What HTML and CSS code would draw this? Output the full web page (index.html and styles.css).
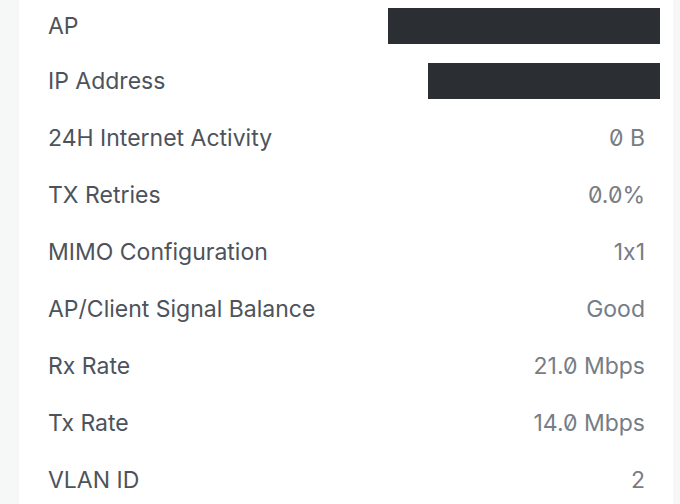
FILE: index.html
```html
<!DOCTYPE html>
<html>
<head>
<meta charset="utf-8">
<link rel="stylesheet" href="styles.css">
</head>
<body>
<div class="page">
  <div class="panel">
    <div class="row first"><span class="label">AP</span><span class="redact r1"></span></div>
    <div class="row"><span class="label">IP Address</span><span class="redact r2"></span></div>
    <div class="row"><span class="label">24H Internet Activity</span><span class="value">0 B</span></div>
    <div class="row"><span class="label">TX Retries</span><span class="value">0.0%</span></div>
    <div class="row"><span class="label">MIMO Configuration</span><span class="value">1x1</span></div>
    <div class="row"><span class="label">AP/Client Signal Balance</span><span class="value">Good</span></div>
    <div class="row"><span class="label">Rx Rate</span><span class="value">21.0 Mbps</span></div>
    <div class="row"><span class="label">Tx Rate</span><span class="value">14.0 Mbps</span></div>
    <div class="row"><span class="label">VLAN ID</span><span class="value">2</span></div>
  </div>
</div>
</body>
</html>
```
FILE: styles.css
```css
html, body {
  margin: 0;
  padding: 0;
  background: #f6f8f8;
  height: 504px;
  overflow: hidden;
}
.page {
  display: flex;
  padding: 0 7px 0 19px;
}
.panel {
  flex: 1;
  background: #ffffff;
  height: 504px;
  padding: 0 28px 0 29px;
  font-family: Inter, "Noto Sans", sans-serif;
  font-size: 23px;
  font-feature-settings: "zero" 1, "calt" 0;
}
.row {
  display: flex;
  align-items: center;
  justify-content: space-between;
  height: 57px;
}
.row.first {
  height: 52px;
}
.label {
  color: #4d535b;
}
.value {
  color: #777d85;
}
.redact {
  background: #2b2f33;
  height: 36px;
  margin-right: -15px;
}
.r1 { width: 272px; }
.r2 { width: 232px; }
```
